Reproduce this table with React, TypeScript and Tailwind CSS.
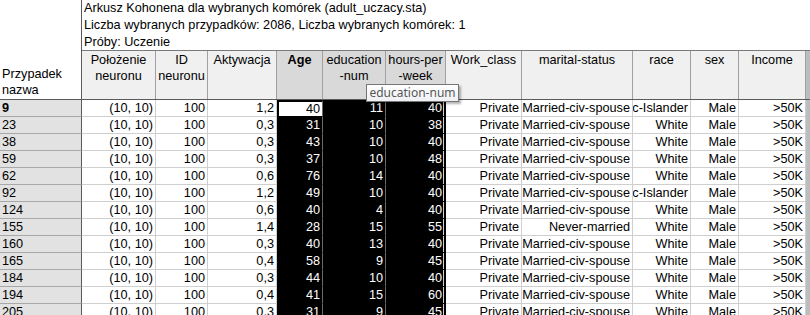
import clsx from "clsx";

// Column layout of the sheet (px widths written out for Tailwind)
const COLS = [
  { key: "pos", lines: ["Położenie", "neuronu"], w: "w-[74px]" },
  { key: "id", lines: ["ID", "neuronu"], w: "w-[52px]" },
  { key: "akt", lines: ["Aktywacja"], w: "w-[69px]" },
  { key: "age", lines: ["Age"], w: "w-[46px]", sel: true, bold: true },
  { key: "edu", lines: ["education", "-num"], w: "w-[63px]", sel: true },
  { key: "hrs", lines: ["hours-per", "-week"], w: "w-[60px]", sel: true },
  { key: "work", lines: ["Work_class"], w: "w-[76px]" },
  { key: "marital", lines: ["marital-status"], w: "w-[111px]" },
  { key: "race", lines: ["race"], w: "w-[58px]" },
  { key: "sex", lines: ["sex"], w: "w-[48px]" },
  { key: "income", lines: ["Income"], w: "w-[67px]" },
];

const MCS = "Married-civ-spouse";
const API = "Asian-Pac-Islander";

const ROWS: [string, string, string, string, string, string, string][] = [
  ["9", "1,2", "40", "11", "40", MCS, API],
  ["23", "0,3", "31", "10", "38", MCS, "White"],
  ["38", "0,3", "43", "10", "40", MCS, "White"],
  ["59", "0,3", "37", "10", "48", MCS, "White"],
  ["62", "0,6", "76", "14", "40", MCS, "White"],
  ["92", "1,2", "49", "10", "40", MCS, API],
  ["124", "0,6", "40", "4", "40", MCS, "White"],
  ["155", "1,4", "28", "15", "55", "Never-married", "White"],
  ["160", "0,3", "40", "13", "40", MCS, "White"],
  ["165", "0,4", "58", "9", "45", MCS, "White"],
  ["184", "0,3", "44", "10", "40", MCS, "White"],
  ["194", "0,4", "41", "15", "60", MCS, "White"],
  ["205", "0,3", "31", "9", "45", MCS, "White"],
];

function cellTone(key: string, active: boolean): string {
  if (key === "age")
    return active
      ? "bg-white text-black border-l-2 border-t-2 border-l-black border-t-black border-r-[#6b6b6b] border-b-black"
      : "bg-black text-white border-l-2 border-l-black border-r-[#6b6b6b] border-b-black";
  if (key === "edu") return "bg-black text-white border-r-[#6b6b6b] border-b-black";
  if (key === "hrs")
    return "bg-black text-white border-r-2 border-r-black border-b-black shadow-[inset_-1px_0_0_#d0d0d0]";
  return "bg-white text-black border-r-[#cfcfcf] border-b-[#cfcfcf]";
}

export default function App() {
  return (
    <div className="relative w-[810px] h-[315px] overflow-hidden bg-white font-['Liberation_Sans',Arial,sans-serif] text-[12.7px] text-black">
      {/* ── Top: label header + title + column headers ── */}
      <div className="flex">
        <div className="w-[82px] h-[100px] shrink-0 flex flex-col justify-end border-r border-b border-[#5a5a5a] pl-[2px] pb-[1px] leading-[16px]">
          <span>Przypadek</span>
          <span>nazwa</span>
        </div>
        <div className="flex flex-col w-[728px]">
          <div className="h-[51px] border-b border-[#7a7a7a] pl-[2px] leading-[17px] whitespace-nowrap">
            <div>Arkusz Kohonena dla wybranych komórek (adult_uczacy.sta)</div>
            <div>Liczba wybranych przypadków: 2086, Liczba wybranych komórek: 1</div>
            <div>Próby: Uczenie</div>
          </div>
          <div className="flex h-[49px] border-b border-[#5a5a5a]">
            {COLS.map((c) => (
              <div
                key={c.key}
                className={clsx(
                  "shrink-0 h-full border-r border-[#a0a0a0] flex flex-col items-center pt-[1px] leading-[16px] whitespace-nowrap",
                  c.w,
                  c.sel ? "bg-[#d9d9d9]" : "bg-[#f0f0f0]",
                  c.bold && "font-bold"
                )}
              >
                {c.lines.map((l) => (
                  <span key={l}>{l}</span>
                ))}
              </div>
            ))}
            <div className="w-[4px] shrink-0 bg-[#bdbdbd]" />
          </div>
        </div>
      </div>

      {/* ── Data rows ── */}
      {ROWS.map(([name, akt, age, edu, hrs, marital, race], ri) => {
        const vals: Record<string, string> = {
          pos: "(10, 10)",
          id: "100",
          akt,
          age,
          edu,
          hrs,
          work: "Private",
          marital,
          race,
          sex: "Male",
          income: ">50K",
        };
        return (
          <div key={name} className="flex h-[17px]">
            <div
              className={clsx(
                "w-[82px] shrink-0 flex items-center bg-[#e2e2e2] border-r border-r-[#5a5a5a] border-b border-b-[#a8a8a8] pl-[2px] leading-[16px]",
                ri === 0 && "font-bold"
              )}
            >
              {name}
            </div>
            {COLS.map((c) => (
              <div
                key={c.key}
                className={clsx(
                  "shrink-0 flex items-center justify-end overflow-hidden whitespace-nowrap border-r border-b pr-[2px] leading-[16px]",
                  c.w,
                  cellTone(c.key, ri === 0)
                )}
              >
                <span className="shrink-0">{vals[c.key]}</span>
              </div>
            ))}
            <div className="w-[4px] shrink-0 bg-[#bdbdbd]" />
          </div>
        );
      })}

      {/* ── Header tooltip ── */}
      <div className="absolute left-[366px] top-[84px] h-[18px] w-[93px] flex items-center justify-center border border-[#767676] bg-gradient-to-b from-white to-[#eef0f4] shadow-[2px_2px_2px_rgba(0,0,0,0.3)] font-['Noto_Sans',sans-serif] text-[12px] leading-none text-[#575757]">
        education-num
      </div>
    </div>
  );
}
